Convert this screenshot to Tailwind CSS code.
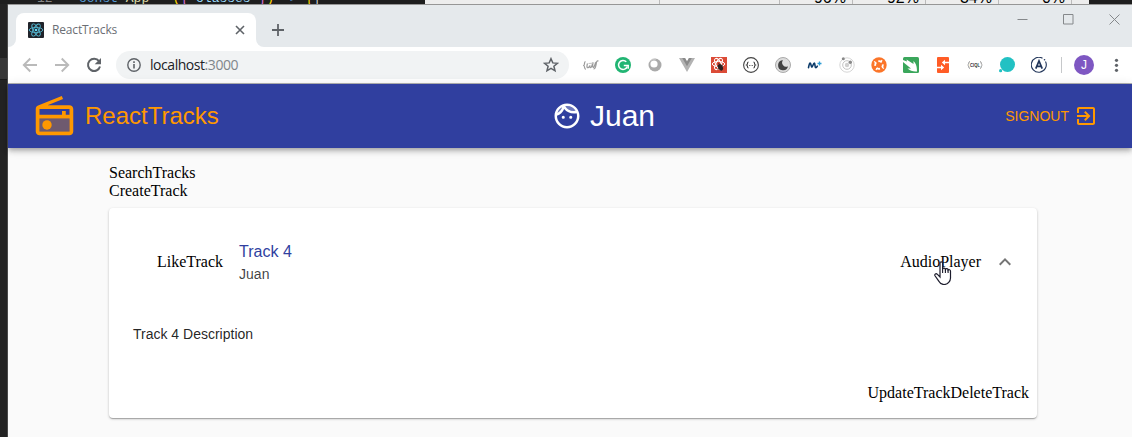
<!DOCTYPE html>
<html lang="en">
<head>
<meta charset="utf-8">
<title>ReactTracks</title>
<script src="https://cdn.jsdelivr.net/npm/@tailwindcss/browser@4"></script>
</head>
<body class="relative flex h-[437px] w-[1132px] flex-col overflow-hidden bg-[#1e1e1e] font-['Liberation_Sans',sans-serif]">

<!-- editor and spreadsheet windows behind the browser -->
<div class="flex h-1 shrink-0 overflow-hidden">
  <div class="flex w-[425px] items-end overflow-hidden pl-[37px] font-['Liberation_Mono',monospace] text-[13px] leading-[10px] whitespace-pre">
    <span class="w-[42px] text-[#858585]">12</span><span class="text-[#569cd6]">const</span><span class="text-[#dcdcaa]"> App</span><span class="text-[#d4d4d4]"> = </span><span class="text-[#ffd700]">(</span><span class="text-[#da70d6]">{</span><span class="text-[#9cdcfe]"> classes </span><span class="text-[#da70d6]">}</span><span class="text-[#ffd700]">)</span><span class="text-[#569cd6]"> =&gt; </span><span class="text-[#ffd700]">{</span><span class="text-[#d4d4d4]">|</span>
  </div>
  <div class="flex w-[664px] items-end overflow-hidden bg-[#ededed] text-right text-[16px] leading-[12px] text-black">
    <span class="h-1 w-[235px] border-r border-[#bbb]"></span>
    <span class="h-1 w-[120px] border-r border-[#bbb]"></span>
    <span class="flex h-1 w-[73px] items-end justify-end border-r border-[#bbb] pr-1.5">96%</span>
    <span class="flex h-1 w-[73px] items-end justify-end border-r border-[#bbb] pr-1.5">92%</span>
    <span class="flex h-1 w-[73px] items-end justify-end border-r border-[#bbb] pr-1.5">34%</span>
    <span class="flex h-1 w-[73px] items-end justify-end border-r border-[#bbb] pr-1.5">0%</span>
  </div>
</div>

<div class="flex min-h-0 flex-1">
<div class="flex w-2 shrink-0 flex-col border-r border-[#4a4a4a] bg-[#232323]"><div class="mt-[54px] h-[22px] border-b border-[#191919] bg-[#373737]"></div></div>
<main class="flex min-w-0 flex-1 flex-col border-t border-[#969696] bg-[#fafafa]">

  <!-- tab strip -->
  <div class="flex h-[42px] shrink-0 bg-[#e5e9ec]">
    <div class="flex w-2 items-end bg-white"><div class="h-full w-2 rounded-br-lg bg-[#e5e9ec]"></div></div>
    <div class="flex flex-col justify-end">
      <div class="flex h-[34px] w-[240px] items-center rounded-t-lg bg-white pl-3 pr-[11px]">
        <svg class="size-4" viewBox="0 0 16 16"><rect width="16" height="16" rx="1" fill="#20232a"/><g fill="none" stroke="#53b5cf" stroke-width=".9"><ellipse cx="8" cy="8" rx="6.8" ry="2.6"/><ellipse cx="8" cy="8" rx="6.8" ry="2.6" transform="rotate(60 8 8)"/><ellipse cx="8" cy="8" rx="6.8" ry="2.6" transform="rotate(120 8 8)"/></g><circle cx="8" cy="8" r="1.3" fill="#61dafb"/></svg>
        <span class="ml-2 flex-1 font-['Open_Sans',sans-serif] text-[12px] leading-4 tracking-[-0.45px] text-[#6b6f75]"><span class="tracking-[-0.15px]">ReactTracks</span></span>
        <svg class="size-[10px]" viewBox="0 0 10 10"><path d="M1 1l8 8M9 1L1 9" stroke="#5f6368" stroke-width="1.6"/></svg>
      </div>
    </div>
    <div class="w-2 bg-white"><div class="h-full w-2 rounded-bl-lg bg-[#e5e9ec]"></div></div>
    <svg class="mt-[19px] ml-2 size-3" viewBox="0 0 12 12"><path d="M6 0v12M0 6h12" stroke="#5f6368" stroke-width="1.8"/></svg>
    <div class="mt-[9px] ml-auto flex gap-[35px] pr-3">
      <svg class="size-[11px]" viewBox="0 0 11 11"><path d="M.5 5.500h10" stroke="#85888b"/></svg>
      <svg class="size-[11px]" viewBox="0 0 11 11"><path d="M.5.5h9.500v9.500H.5z" fill="none" stroke="#85888b"/></svg>
      <svg class="size-[11px]" viewBox="0 0 11 11"><path d="M.5.5l10 10M10.500.5l-10 10" stroke="#85888b"/></svg>
    </div>
  </div>

  <!-- toolbar -->
  <div class="flex h-[37px] shrink-0 items-center border-b border-[#b5b5b5] bg-white pl-3.5">
    <div class="flex gap-4">
      <svg class="size-4" viewBox="0 0 16 16"><path d="M15 8H2.500M8.300 1.500L1.800 8l6.500 6.500" fill="none" stroke="#bababa" stroke-width="1.900"/></svg>
      <svg class="size-4" viewBox="0 0 16 16"><path d="M1 8h12.500M7.700 1.500L14.200 8l-6.500 6.500" fill="none" stroke="#bababa" stroke-width="1.900"/></svg>
      <svg class="size-4" viewBox="0 0 16 16"><path d="M13 4.200A6.100 6.100 0 1 0 14 9.500" fill="none" stroke="#5f6368" stroke-width="2"/><path d="M15 1v6.300H8.700z" fill="#5f6368"/></svg>
    </div>
    <div class="ml-3.5 flex h-7 w-[453px] items-center rounded-full bg-[#f1f3f4] pr-2.5 pl-[11px]">
      <svg class="size-[14px]" viewBox="0 0 14 14"><circle cx="7" cy="7" r="6.200" fill="none" stroke="#5f6368" stroke-width="1.400"/><path d="M7 6v4.500M7 3.300v1.600" stroke="#5f6368" stroke-width="1.600"/></svg>
      <span class="ml-[9px] flex-1 font-['Open_Sans',sans-serif] text-[14px] leading-5 tracking-[-0.45px] text-[#80868b]"><span class="text-[#202124]">localhost</span>:3000</span>
      <svg class="size-4" viewBox="0 0 16 16"><path d="M8 1.700l1.800 4.200 4.600.4-3.500 3 1.100 4.500L8 11.400l-4 2.400 1.100-4.500-3.500-3 4.600-.4z" fill="none" stroke="#5f6368" stroke-width="1.500"/></svg>
    </div>
    <div class="ml-3.5 flex gap-4">
      <svg class="size-4" viewBox="0 0 16 16" fill="none" stroke="#999" stroke-width="1.200"><path d="M2.500 4.500C.8 5 2 8 .7 8.500 2 9 1 12 2.800 12.300M4.500 6.500c-1 3-.5 5 1 4l1.500-2c-.5 3 1 3 2 0l1-3c-.5 3-.5 6 1 4.500l2-5M15.500 4c-2-.5-2 1-2.500 4s-1 4-2.500 4"/><path d="M5.500 6.500l6-.5" stroke="#c4c4c4"/></svg>
      <svg class="size-4" viewBox="0 0 16 16"><circle cx="8" cy="8" r="8" fill="#21b573"/><path d="M11.300 4.800A4.500 4.500 0 1 0 12.300 9.500" fill="none" stroke="#fff" stroke-width="1.500"/><path d="M8.800 8.400h4.400v3.300" fill="none" stroke="#fff" stroke-width="1.500"/></svg>
      <svg class="size-4" viewBox="0 0 16 16"><circle cx="8" cy="8" r="6.500" fill="#aaa"/><circle cx="7" cy="7" r="3.600" fill="#fff"/><path d="M3 4a6.500 6.500 0 0 1 6-2" stroke="#d5d5d5" fill="none"/></svg>
      <svg class="size-4" viewBox="0 0 16 16"><path d="M0 1h6l2 3.500L10 1h6L8 15z" fill="#b3b3b3"/><path d="M3.200 1H6l2 3.500L10 1h2.800L8 9.300z" fill="#8a8a8a"/></svg>
      <svg class="size-4" viewBox="0 0 16 16"><path d="M0 0h16v16H0z" fill="#db4b37"/><g fill="none" stroke="#fff" stroke-width="1"><ellipse cx="7.500" cy="7" rx="6.200" ry="2.600"/><ellipse cx="7.500" cy="7" rx="6.200" ry="2.600" transform="rotate(60 7.500 7)"/><ellipse cx="7.500" cy="7" rx="6.200" ry="2.600" transform="rotate(120 7.500 7)"/></g><ellipse cx="9.500" cy="10.300" rx="2.300" ry="3.500" fill="#29201f" transform="rotate(-25 9.500 10.300)"/><path d="M6 9l6 2.500M6.500 12l5.500-3.500M7.500 6l1 1.500" stroke="#29201f" stroke-width=".8"/></svg>
      <svg class="size-4" viewBox="0 0 16 16"><circle cx="8" cy="8" r="7.400" fill="#fff" stroke="#444" stroke-width="1.100"/><path d="M5.500 5C3.800 5 5 7.500 3.700 8 5 8.500 3.800 11 5.500 11M10.500 5c1.700 0 .5 2.500 1.800 3-1.300.5-.1 3-1.800 3" fill="none" stroke="#333" stroke-width="1.100"/><path d="M6 8.500h4" stroke="#777" stroke-dasharray="1 .5"/></svg>
      <svg class="size-4" viewBox="0 0 16 16"><circle cx="8" cy="8" r="7.500" fill="#dcdcdc" stroke="#aaa"/><path d="M8 3.200a5 5 0 1 0 5 6A4 4 0 0 1 8 3.200z" fill="#414141"/></svg>
      <svg class="size-4" viewBox="0 0 16 16" fill="none"><path d="M1.500 10.700C2 7.500 2.800 5.500 3.400 6.200c.8 1 .7 4 1.500 4S6.300 6 7.300 6.100s.4 4.100 1.300 4.500c.8.300 1.300-.7 1.700-1.500" stroke="#0b3a69" stroke-width="1.600" stroke-linecap="round"/><path d="M12.500 4.500v4M10.500 6.500h4" stroke="#2d9bd3" stroke-width="1.300"/></svg>
      <svg class="size-4" viewBox="0 0 16 16" fill="none"><circle cx="8" cy="8" r="7.200" stroke="#d6d6d6"/><circle cx="8" cy="8" r="4.300" stroke="#c4c4c4"/><circle cx="8" cy="8" r="2.200" fill="#d0d0d0"/><circle cx="4.300" cy="1.700" r="1.500" fill="#888"/><circle cx="11.300" cy="5.300" r="1.700" fill="#888"/></svg>
      <svg class="size-4" viewBox="0 0 16 16"><circle cx="8" cy="8" r="7.700" fill="#fb7529"/><circle cx="8" cy="8" r="3.800" fill="none" stroke="#fff" stroke-width="1.800" stroke-dasharray="3.600 2.370" stroke-dashoffset="1.200"/><path d="M3 4.500l2 1.200M11 3l-1 2M13 11.500l-2-1.200M5 13l1-2" stroke="#fff" stroke-width="1.200"/></svg>
      <svg class="size-4" viewBox="0 0 16 16"><rect width="16" height="16" rx="1.500" fill="#3aa65b"/><path d="M0 3l4 1.500L3.500 2.500 10.500 7V4c2.500 2.500 3.500 5 3.500 10.500-4 .3-7-.8-9.500-3h3.500L0 5z" fill="#fff"/></svg>
      <svg class="size-4" viewBox="0 0 16 16"><rect x="2" y="0" width="12" height="16" rx="1" fill="#ff5c26"/><path d="M15 5.500H9.500M2 10.500h5" stroke="#fff" stroke-width="1.600"/><path d="M10 2.800v5.400L6.800 5.500zM6 7.800v5.400l3.200-2.700z" fill="#fff"/></svg>
      <svg class="size-4" viewBox="0 0 16 16"><path d="M3 4.500C1 4.500 2.500 7.500.7 8 2.500 8.500 1 11.500 3 11.500M13 4.500c2 0 .5 3 2.300 3.500-1.800.5-.3 3.500-2.300 3.500" fill="none" stroke="#999"/><text x="3" y="10" font-family="Liberation Sans" font-size="5.500" font-weight="700" textLength="10" lengthAdjust="spacingAndGlyphs" fill="#333">CIQL</text></svg>
      <svg class="size-4" viewBox="0 0 16 16"><circle cx="8.500" cy="7.500" r="7.500" fill="#22c1c3"/><circle cx="1.600" cy="13.700" r="1.600" fill="#22c1c3"/></svg>
      <svg class="size-4" viewBox="0 0 16 16"><path d="M11.500 1.300a7.500 7.500 0 1 0 3 3.200" fill="none" stroke="#22365a" stroke-width="1.100"/><circle cx="13.500" cy="2.700" r=".8" fill="#22365a"/><path d="M4.800 11.700L8 4l3.200 7.700M6.300 9.400h3.800" fill="none" stroke="#22365a" stroke-width="1.700"/></svg>
    </div>
    <div class="ml-3.5 h-4 w-px bg-[#c6c8ca]"></div>
    <div class="ml-3 flex size-5 items-center justify-center rounded-full bg-[#7e57c2] text-[12px] leading-none text-white">J</div>
    <svg class="ml-[15px] h-4 w-1.5 overflow-visible" viewBox="0 0 6 16" fill="#5f6368"><circle cx="7.500" cy="3.300" r="1.600"/><circle cx="7.500" cy="8.300" r="1.600"/><circle cx="7.500" cy="13.300" r="1.600"/></svg>
  </div>

  <!-- app bar -->
  <header class="grid h-16 shrink-0 grid-cols-[528px_1fr_auto] items-center bg-[#303f9f] pr-[34px] pl-6 text-[#ff9800] shadow-[0_2px_4px_-1px_rgba(0,0,0,.2),0_4px_5px_0_rgba(0,0,0,.14),0_1px_10px_0_rgba(0,0,0,.12)]">
    <div class="flex items-center gap-2">
      <svg class="size-[45px]" viewBox="0 0 24 24" fill="currentColor"><path opacity=".3" d="M4 20h16v-7H4v7z"/><path d="M20 6H8.300l8.260-3.340L15.880 1 3.240 6.150C2.510 6.430 2 7.170 2 8v12c0 1.100.900 2 2 2h16c1.100 0 2-.9 2-2V8c0-1.110-.89-2-2-2zm0 2v3h-2V9h-2v2H4V8h16zM4 20v-7h16v7H4z"/><circle cx="8" cy="16.500" r="2.500"/></svg>
      <span class="text-2xl">ReactTracks</span>
    </div>
    <div class="flex items-center gap-2 pl-4 text-white">
      <svg class="-ml-6 size-[30px]" viewBox="0 0 24 24" fill="currentColor"><path opacity=".3" d="M17.500 8c.46 0 .91-.05 1.340-.12C17.440 5.560 14.900 4 12 4c-.46 0-.91.050-1.340.12C12.060 6.440 14.600 8 17.500 8zM8.080 5.030C6.370 6 5.050 7.580 4.420 9.470c1.710-.97 3.030-2.550 3.660-4.440z"/><path d="M10.250 13a1.250 1.250 0 1 1-2.500 0 1.250 1.250 0 0 1 2.500 0zM15 11.750a1.250 1.250 0 1 0 0 2.500 1.250 1.250 0 0 0 0-2.500zM22 12c0 5.520-4.480 10-10 10S2 17.520 2 12 6.480 2 12 2s10 4.480 10 10zM10.660 4.120C12.060 6.440 14.600 8 17.500 8c.46 0 .91-.05 1.340-.12C17.440 5.560 14.900 4 12 4c-.46 0-.91.050-1.340.12zM4.420 9.470c1.710-.97 3.030-2.550 3.660-4.440C6.370 6 5.050 7.580 4.420 9.470zM20 12c0-.78-.12-1.530-.33-2.240-.7.150-1.420.24-2.170.24-3.130 0-5.920-1.440-7.760-3.690C8.690 8.870 6.600 10.880 4 11.860c.01.040 0 .09 0 .14 0 4.410 3.590 8 8 8s8-3.590 8-8z"/></svg>
      <span class="text-[30px] leading-8">Juan</span>
    </div>
    <div class="flex items-center gap-[5px]">
      <span class="text-sm">SIGNOUT</span>
      <svg class="size-6" viewBox="0 0 24 24" fill="currentColor"><path d="M19 3H5c-1.110 0-2 .9-2 2v4h2V5h14v14H5v-4H3v4c0 1.100.89 2 2 2h14c1.100 0 2-.9 2-2V5c0-1.100-.9-2-2-2z"/><path d="M10.090 15.590L11.500 17l5-5-5-5-1.410 1.410L12.670 11H3v2h9.670z"/></svg>
    </div>
  </header>

  <!-- page content -->
  <section class="mt-4 ml-[101px] w-[928px] font-['Liberation_Serif',serif] text-base leading-[18px] text-black">
    <div>SearchTracks</div>
    <div>CreateTrack</div>
    <article class="mt-2 flex h-[210px] flex-col rounded bg-white shadow-[0_1px_3px_0_rgba(0,0,0,.2),0_1px_1px_0_rgba(0,0,0,.14),0_2px_1px_-1px_rgba(0,0,0,.12)]">
      <div class="flex h-[108px] items-center pr-5 pl-12">
        <span>LikeTrack</span>
        <div class="ml-4 flex-1 font-['Liberation_Sans',sans-serif]">
          <div class="leading-6 text-[#303f9f]">Track 4</div>
          <div class="text-sm leading-5 text-black/75">Juan</div>
        </div>
        <span class="relative">AudioPlayer
          <svg class="absolute top-2 left-[34px] h-6 w-[18px]" viewBox="0 0 18 24"><path d="M6 14V2.300C6 .3 8.600.3 8.600 2.300V8c.3-1.300 2.600-1.200 2.800.4.500-1.200 2.600-.9 2.700.6.600-.8 2.400-.4 2.400 1.200V17c0 3-2.500 6.500-6.500 6.500-3 0-4.200-1.500-5.400-3.600L1 14.800c-.8-1.700 1-2.700 2.200-1.600L6 16z" fill="#fff" stroke="#1c1c2c" stroke-width="1.200"/><path d="M8.600 7.500V12M11.400 8.400V12M14.100 9v3" stroke="#1c1c2c" stroke-width="1.100"/></svg>
        </span>
        <svg class="ml-3 size-6" viewBox="0 0 24 24"><path d="M12 8l-6 6 1.410 1.410L12 10.830l4.590 4.580L18 14z" fill="#757575"/></svg>
      </div>
      <div class="pt-2 pl-6 font-['Liberation_Sans',sans-serif] text-sm leading-5 text-black/87">Track 4 Description</div>
      <div class="mt-auto flex h-[50px] items-center justify-end pr-2"><span>UpdateTrack</span><span>DeleteTrack</span></div>
    </article>
  </section>
</main>
</div>
</body>
</html>
